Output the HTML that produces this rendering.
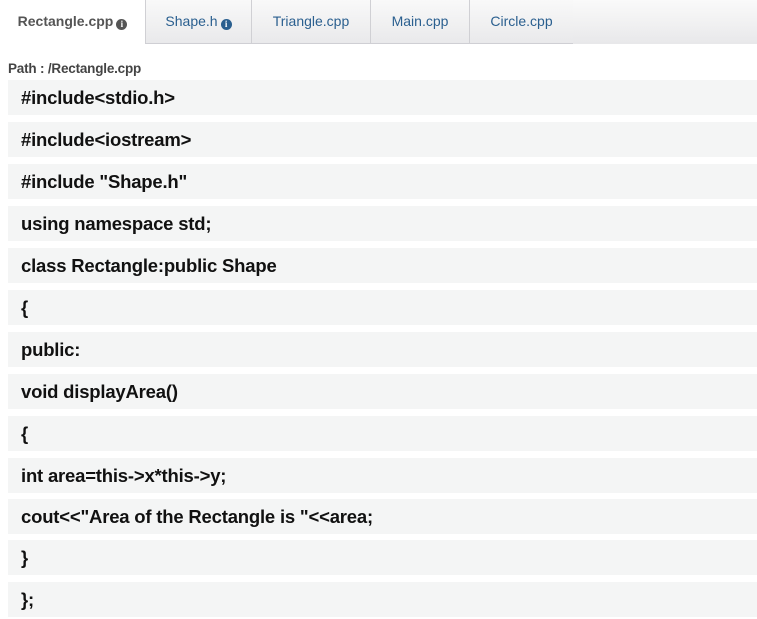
<!DOCTYPE html>
<html><head><meta charset="utf-8"><style>
*{margin:0;padding:0;box-sizing:border-box}
body{width:757px;height:619px;background:#fff;font-family:"Liberation Sans",sans-serif;position:relative;overflow:hidden}
.bar{position:absolute;left:0;top:0;width:757px;height:44px;background:linear-gradient(#fafafa,#e8e8ea)}
.tab{position:absolute;top:0;height:44px;font-size:14px;color:#2a5f8f;text-align:center;line-height:42px;border-left:1px solid #d0d0d4;border-bottom:1px solid #cfcfd4;background:linear-gradient(#f9f9f9,#e9e9eb)}
.tab.act{background:#fff;border:none;color:#555;font-weight:bold}
.i{display:inline-block;width:11px;height:11px;border-radius:50%;background:#2a5f8f;color:#fff;font-size:9px;line-height:11px;font-weight:bold;text-align:center;vertical-align:-1px;margin-left:3px;font-family:"Liberation Serif",serif}
.act .i{background:#555}
.path{position:absolute;left:8px;top:61px;font-size:13.5px;font-weight:bold;color:#444;letter-spacing:-0.2px}
.row{position:absolute;left:8px;width:749px;height:35px;background:#f4f5f5;font-size:18.5px;font-weight:bold;color:#111;line-height:35px;padding-left:13px;letter-spacing:-0.2px}
</style></head><body>
<div class="bar"></div>
<div class="tab act" style="left:0;width:145px">Rectangle.cpp<span class="i">i</span></div>
<div class="tab" style="left:145px;width:106px">Shape.h<span class="i">i</span></div>
<div class="tab" style="left:251px;width:119px">Triangle.cpp</div>
<div class="tab" style="left:370px;width:99px">Main.cpp</div>
<div class="tab" style="left:469px;width:104px;border-right:none">Circle.cpp</div>
<div class="path">Path : /Rectangle.cpp</div>
<div class="row" style="top:80px">#include&lt;stdio.h&gt;</div>
<div class="row" style="top:122px">#include&lt;iostream&gt;</div>
<div class="row" style="top:164px">#include "Shape.h"</div>
<div class="row" style="top:206px">using namespace std;</div>
<div class="row" style="top:248px">class Rectangle:public Shape</div>
<div class="row" style="top:290px">{</div>
<div class="row" style="top:332px">public:</div>
<div class="row" style="top:374px">void displayArea()</div>
<div class="row" style="top:416px">{</div>
<div class="row" style="top:458px">int area=this-&gt;x*this-&gt;y;</div>
<div class="row" style="top:499px">cout&lt;&lt;"Area of the Rectangle is "&lt;&lt;area;</div>
<div class="row" style="top:540px">}</div>
<div class="row" style="top:582px">};</div>
</body></html>
